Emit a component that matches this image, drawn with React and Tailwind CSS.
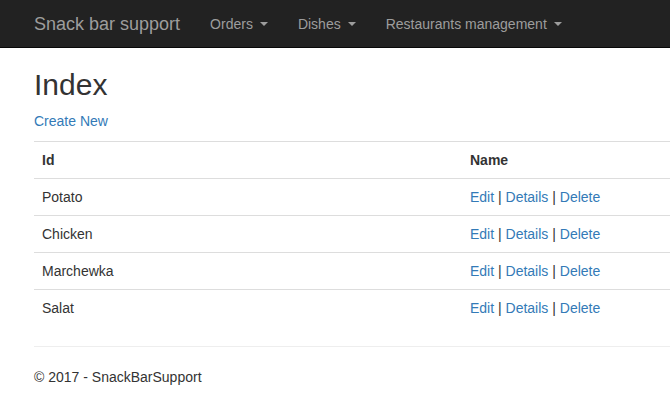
import React from "react";

const font = { fontFamily: '"Liberation Sans", Arial, Helvetica, sans-serif' };

function Caret() {
  return (
    <span className="ml-[7px] inline-block h-0 w-0 border-x-4 border-t-4 border-x-transparent border-t-[#9d9d9d] align-middle" />
  );
}

function NavItem({ label }) {
  return (
    <a className="flex items-center px-[15px] text-[14px] leading-[20px] text-[#9d9d9d]">
      {label}
      <Caret />
    </a>
  );
}

const rows = ["Potato", "Chicken", "Marchewka", "Salat"];

export default function App() {
  return (
    <div
      className="w-[670px] h-[400px] overflow-hidden bg-white text-[14px] leading-[20px] text-[#333]"
      style={font}
    >
      <nav className="h-[48px] bg-[#222] border-b border-[#080808] flex items-center">
        <div className="ml-[34px] flex items-center">
          <a className="pr-[15px] text-[18px] leading-[20px] text-[#9d9d9d]">Snack bar support</a>
          <NavItem label="Orders" />
          <NavItem label="Dishes" />
          <NavItem label="Restaurants management" />
        </div>
      </nav>
      <div className="ml-[34px] w-[720px]">
        <h2 className="mt-[20px] mb-[10px] text-[30px] leading-[33px] font-normal text-[#333]">Index</h2>
        <p className="mb-[10px]">
          <a className="text-[#337ab7]">Create New</a>
        </p>
        <div className="mb-[20px]">
          <div className="flex border-t border-[#ddd]">
            <div className="w-[428px] p-2 font-bold">Id</div>
            <div className="flex-1 p-2 font-bold">Name</div>
          </div>
          {rows.map((r) => (
            <div key={r} className="flex border-t border-[#ddd]">
              <div className="w-[428px] p-2">{r}</div>
              <div className="flex-1 p-2">
                <a className="text-[#337ab7]">Edit</a> |{" "}
                <a className="text-[#337ab7]">Details</a> |{" "}
                <a className="text-[#337ab7]">Delete</a>
              </div>
            </div>
          ))}
        </div>
        <hr className="border-0 border-t border-[#eee] mb-[20px]" />
        <footer>
          <p>© 2017 - SnackBarSupport</p>
        </footer>
      </div>
    </div>
  );
}
